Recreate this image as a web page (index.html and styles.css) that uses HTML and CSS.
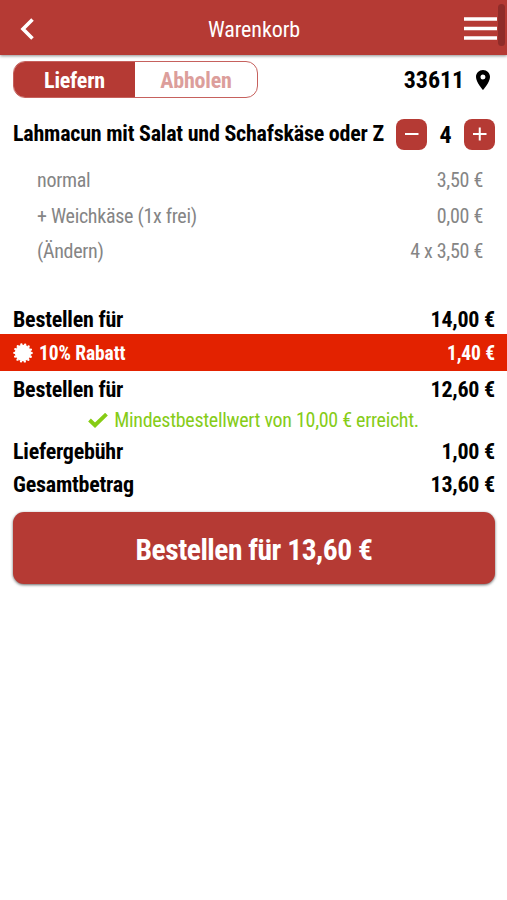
FILE: index.html
```html
<!DOCTYPE html>
<html lang="de">
<head>
<meta charset="utf-8">
<title>Warenkorb</title>
<link rel="stylesheet" href="styles.css">
</head>
<body>
<header class="bar">
  <svg class="back" viewBox="0 0 14 22"><path d="M12.500 1.500 3 11l9.500 9.500" fill="none" stroke="#fff" stroke-width="3.600"/></svg>
  <h1>Warenkorb</h1>
  <svg class="menu" viewBox="0 0 33 23"><path d="M0 2h33M0 11.500h33M0 21h33" stroke="#fff" stroke-width="3.700"/></svg>
  <i class="thumb"></i>
</header>
<main>
  <div class="mode">
    <div class="toggle"><span class="on">Liefern</span><span class="off">Abholen</span></div>
    <div class="zip"><span>33611</span><svg class="pin" viewBox="5 2 14 20"><path fill-rule="evenodd" d="M12 2C8.130 2 5 5.130 5 9c0 5.250 7 13 7 13s7-7.750 7-13c0-3.870-3.130-7-7-7zm0 9.500a2.500 2.500 0 1 1 0-5 2.500 2.500 0 0 1 0 5z"/></svg></div>
  </div>
  <div class="item">
    <span class="name">Lahmacun mit Salat und Schafskäse oder Z</span>
    <button class="step"><svg viewBox="0 0 31 31"><path d="M9 15h13.500"/></svg></button>
    <span class="qty">4</span>
    <button class="step"><svg viewBox="0 0 31 31"><path d="M9 15h13.500M15.750 8.500v13"/></svg></button>
  </div>
  <div class="options">
    <div class="opt"><span>normal</span><span>3,50 €</span></div>
    <div class="opt"><span>+ Weichkäse (1x frei)</span><span>0,00 €</span></div>
    <div class="opt"><span>(Ändern)</span><span>4 x 3,50 €</span></div>
  </div>
  <div class="row sub"><span>Bestellen für</span><span>14,00 €</span></div>
  <div class="row discount">
    <span class="deal"><svg viewBox="0 0 20 20"><circle cx="10" cy="10" r="8.200" fill="#fff"/><circle cx="10" cy="10" r="8.600" fill="none" stroke="#fff" stroke-width="2.400" stroke-linecap="round" stroke-dasharray="0 3.860"/></svg>10% Rabatt</span>
    <span>1,40 €</span>
  </div>
  <div class="row after"><span>Bestellen für</span><span>12,60 €</span></div>
  <div class="notice"><svg viewBox="0 0 20 15"><path d="M1.500 7 7 12.200 18.500 1.200" fill="none" stroke="#86cc14" stroke-width="3.900"/></svg><span>Mindestbestellwert von 10,00 € erreicht.</span></div>
  <div class="row"><span>Liefergebühr</span><span>1,00 €</span></div>
  <div class="row"><span>Gesamtbetrag</span><span>13,60 €</span></div>
  <button class="order">Bestellen für 13,60 €</button>
</main>
</body>
</html>
```
FILE: styles.css
```css
* { box-sizing: border-box; }
body {
  margin: 0;
  height: 900px;
  overflow: hidden;
  background: #fff;
  color: #000;
  font-family: "Roboto Condensed", Roboto, sans-serif;
  font-stretch: 75%;
  white-space: nowrap;
}
svg { display: block; flex: none; }
.bar {
  position: relative;
  height: 55px;
  padding: 2px 10px 0 20px;
  display: grid;
  grid-template-columns: 24px 1fr 33px;
  align-items: center;
  background: #b53a34;
  color: #fff;
  box-shadow: 0 1px 3px rgba(0, 0, 0, .45);
}
.bar h1 { margin: 0; padding-top: 2px; text-align: center; font-size: 22px; font-weight: 400; letter-spacing: -.1px; }
.back { width: 14px; height: 22px; }
.menu { width: 33px; height: 23px; }
.thumb { position: absolute; right: 2px; top: 4px; width: 7px; height: 42px; border-radius: 4px; background: #8f2c29; }
.mode { display: flex; justify-content: space-between; align-items: center; padding: 6px 17px 0 13px; }
.toggle { display: flex; width: 245px; height: 37px; border: 1px solid #c6615d; border-radius: 12px; overflow: hidden; font-size: 22px; font-weight: 700; line-height: 37px; text-align: center; letter-spacing: -.2px; }
.on { width: 121px; background: #b53a34; color: #fff; }
.off { flex: 1; color: #dc9e9b; }
.zip { display: flex; align-items: center; gap: 12px; font-size: 24px; font-weight: 700; letter-spacing: -.1px; }
.pin { width: 14px; height: 20px; }
.item { display: flex; align-items: center; height: 32px; margin-top: 20px; padding: 0 12px 0 13px; font-size: 22px; font-weight: 700; letter-spacing: -.22px; }
.name { width: 383px; padding-bottom: 1px; }
.step { flex: none; width: 31px; height: 31px; padding: 0; border: 0; border-radius: 8px; background: #b53a34; }
.step path { stroke: #fff; stroke-width: 2; }
.qty { flex: 1; padding-top: 1px; text-align: center; font-size: 24px; }
.options { padding: 13px 24px 0 37px; height: 152px; color: #858585; font-size: 20px; letter-spacing: -.3px; }
.opt { display: flex; justify-content: space-between; line-height: 35.500px; }
.row { display: flex; justify-content: space-between; align-items: center; height: 33px; padding: 2px 12px 0 13px; font-size: 22px; font-weight: 700; letter-spacing: -.22px; }
.sub { height: 32px; }
.discount { height: 37px; padding-top: 1px; background: #e32200; color: #fff; font-size: 19.500px; letter-spacing: -.1px; }
.deal { display: flex; align-items: center; gap: 6px; }
.deal svg { width: 20px; height: 20px; }
.after { height: 35px; padding-top: 1px; }
.notice { display: flex; justify-content: center; align-items: center; gap: 6px; height: 28px; color: #86cc18; font-size: 20px; letter-spacing: -.3px; }
.notice svg { width: 20px; height: 15px; }
.order {
  display: block;
  width: 482px;
  height: 72px;
  margin: 12px 0 0 13px;
  padding: 3px 0 0;
  border: 0;
  border-radius: 11px;
  background: #b53a34;
  box-shadow: 0 1px 3px rgba(0, 0, 0, .6);
  color: #fff;
  font: 700 29.500px "Roboto Condensed", Roboto, sans-serif;
  font-stretch: 75%;
  letter-spacing: -.47px;
}
```
